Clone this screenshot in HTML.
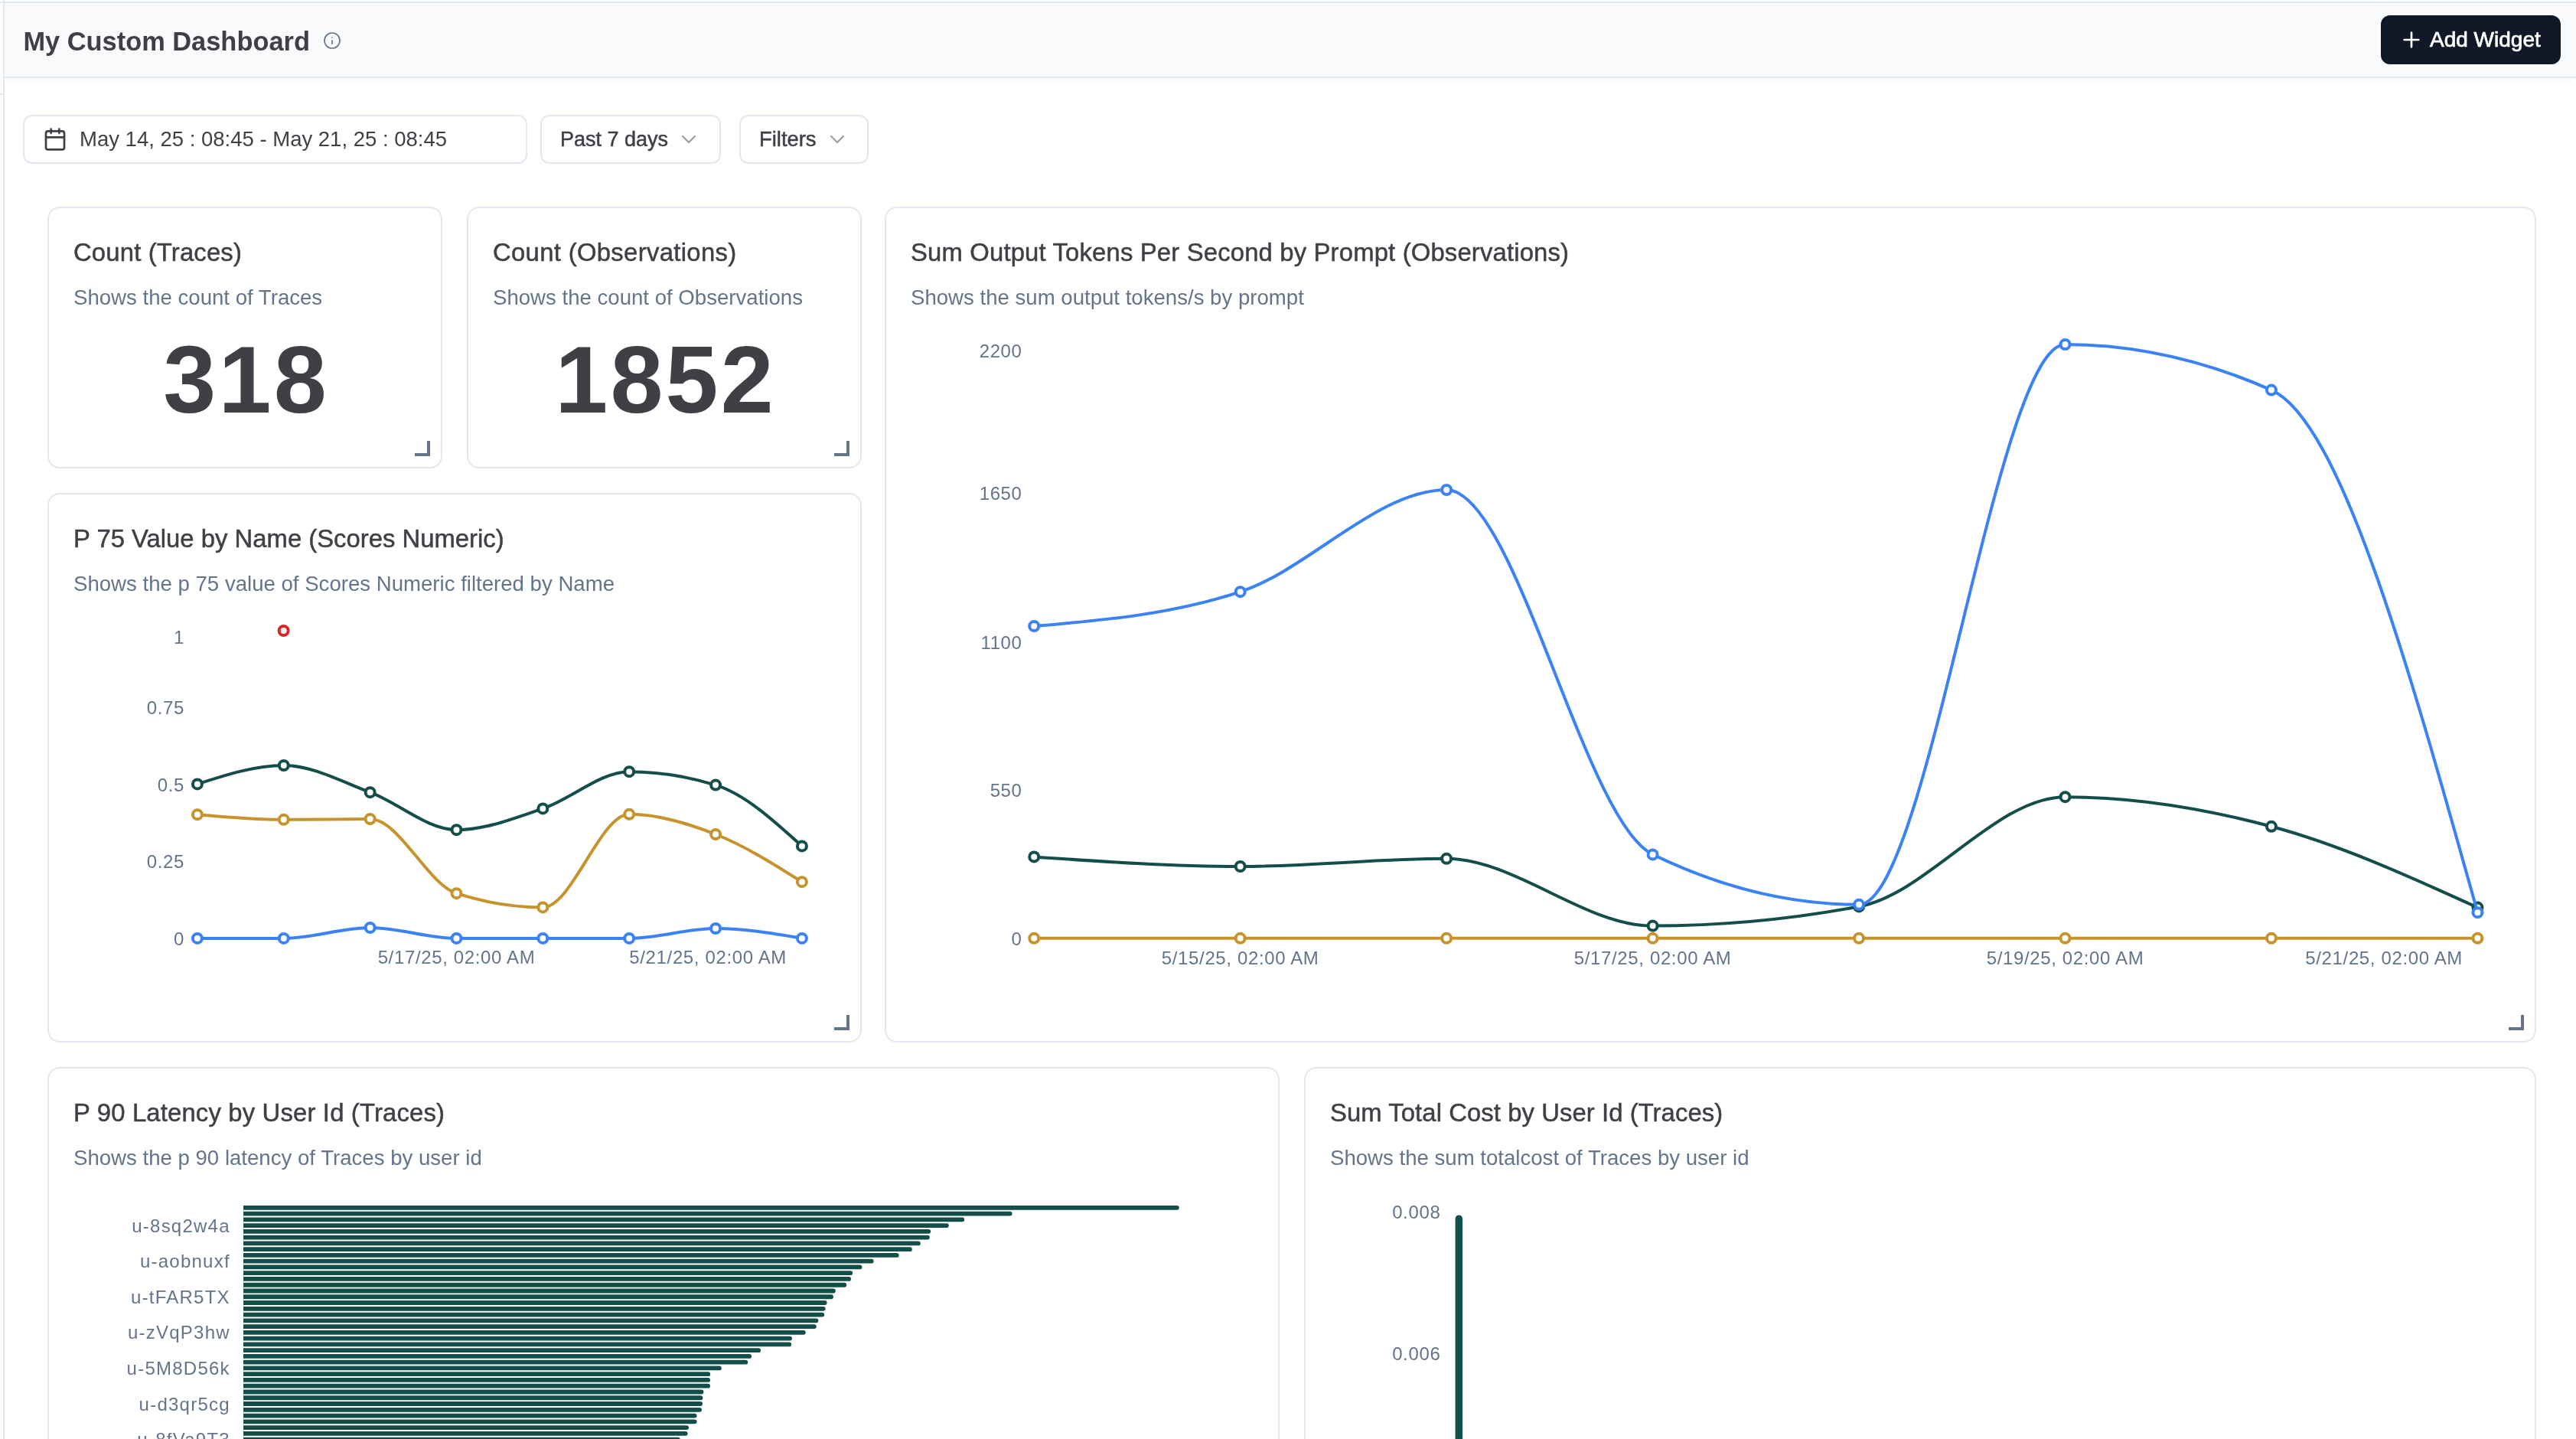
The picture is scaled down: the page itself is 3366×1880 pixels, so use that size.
<!DOCTYPE html>
<html><head><meta charset="utf-8"><title>My Custom Dashboard</title>
<style>
html,body{margin:0;padding:0;background:#fff;}
body{width:3366px;height:1880px;overflow:hidden;}
#root{zoom:2;position:relative;will-change:transform;width:1683px;height:940px;overflow:hidden;font-family:"Liberation Sans",sans-serif;color:#3f3f46;}
.abs{position:absolute;}
.card{position:absolute;box-sizing:border-box;border:1px solid #e2e8f0;border-radius:8px;background:#fff;}
.ct{position:absolute;left:16px;top:19px;-webkit-text-stroke:0.25px #3f3f46;font-size:16.4px;letter-spacing:0.09px;line-height:20px;white-space:nowrap;color:#3f3f46;}
.cs{position:absolute;left:16px;top:50.5px;font-size:13.8px;line-height:16px;white-space:nowrap;color:#64748b;}
.big{position:absolute;text-align:center;font-size:62px;letter-spacing:1.6px;text-indent:1.6px;font-weight:bold;line-height:62px;color:#3f3f46;}
.hd{position:absolute;background:#64748b;}
.ov{position:absolute;left:0;top:0;font-family:"Liberation Sans",sans-serif;}
.btnb{position:absolute;box-sizing:border-box;border:1px solid #e2e8f0;border-radius:6px;background:#fff;height:32px;top:75px;}
</style></head><body><div id="root">
<div class="abs" style="left:0;top:1px;width:1683px;height:1px;background:#e2e8f0"></div>
<div class="abs" style="left:3px;top:2px;width:1680px;height:48px;background:#f8fafc"></div>
<div class="abs" style="left:3px;top:50px;width:1680px;height:1px;background:#e2e8f0;box-shadow:0 1px 3px rgba(0,0,0,0.06)"></div>
<div class="abs" style="left:2px;top:0;width:1px;height:940px;background:#e2e8f0"></div>
<div class="abs" style="left:0;top:61px;width:2px;height:1px;background:#e2e8f0"></div>
<div class="abs" style="left:15.2px;top:16px;font-size:17.2px;font-weight:bold;line-height:22px;white-space:nowrap;color:#3f3f46">My Custom Dashboard</div>
<svg class="abs" style="left:211px;top:20.5px" width="12" height="12" viewBox="0 0 24 24" fill="none" stroke="#64748b" stroke-width="1.7" stroke-linecap="round"><circle cx="12" cy="12" r="10"/><path d="M12 16v-4M12 8h.01"/></svg>
<div class="abs" style="left:1555.5px;top:10px;width:117.5px;height:32px;border-radius:6px;background:#111827"></div>
<svg class="abs" style="left:1567.6px;top:18px" width="16" height="16" viewBox="0 0 24 24" fill="none" stroke="#fff" stroke-width="2" stroke-linecap="round"><path d="M5 12h14M12 5v14"/></svg>
<div class="abs" style="left:1587.5px;top:18px;font-size:14px;line-height:16px;white-space:nowrap;color:#fff;-webkit-text-stroke:0.35px #fff">Add Widget</div>
<div class="btnb" style="left:15px;width:329.5px"></div>
<svg class="abs" style="left:28px;top:82.8px" width="16" height="16" viewBox="0 0 24 24" fill="none" stroke="#3f3f46" stroke-width="2" stroke-linecap="round" stroke-linejoin="round"><rect x="3" y="4" width="18" height="18" rx="2"/><path d="M16 2v4M8 2v4M3 10h18"/></svg>
<div class="abs" style="left:52px;top:83px;font-size:13.75px;line-height:16px;white-space:nowrap;color:#3f3f46">May 14, 25 : 08:45 - May 21, 25 : 08:45</div>
<div class="btnb" style="left:353px;width:118px"></div>
<div class="abs" style="left:366px;top:83px;font-size:13.5px;line-height:16px;white-space:nowrap;color:#3f3f46;-webkit-text-stroke:0.25px #3f3f46">Past 7 days</div>
<svg class="abs" style="left:442px;top:83px" width="16" height="16" viewBox="0 0 24 24" fill="none" stroke="#3f3f46" stroke-opacity="0.5" stroke-width="1.75" stroke-linecap="round" stroke-linejoin="round"><path d="m6 9 6 6 6-6"/></svg>
<div class="btnb" style="left:483px;width:84.5px"></div>
<div class="abs" style="left:496px;top:83px;font-size:13.7px;line-height:16px;white-space:nowrap;color:#3f3f46;-webkit-text-stroke:0.25px #3f3f46">Filters</div>
<svg class="abs" style="left:539px;top:83px" width="16" height="16" viewBox="0 0 24 24" fill="none" stroke="#3f3f46" stroke-opacity="0.5" stroke-width="1.75" stroke-linecap="round" stroke-linejoin="round"><path d="m6 9 6 6 6-6"/></svg>
<div class="card" style="left:31px;top:135px;width:258px;height:171px"><div class="ct" style="letter-spacing:0.09px">Count (Traces)</div><div class="cs">Shows the count of Traces</div></div><div class="big" style="left:31px;width:258px;top:217px">318</div><div class="hd" style="left:271px;top:296px;width:10px;height:2px"></div><div class="hd" style="left:279px;top:288px;width:2px;height:10px"></div><div class="card" style="left:305px;top:135px;width:258px;height:171px"><div class="ct" style="letter-spacing:0.17px">Count (Observations)</div><div class="cs">Shows the count of Observations</div></div><div class="big" style="left:305px;width:258px;top:217px">1852</div><div class="hd" style="left:545px;top:296px;width:10px;height:2px"></div><div class="hd" style="left:553px;top:288px;width:2px;height:10px"></div><div class="card" style="left:578px;top:135px;width:1079px;height:546px"><div class="ct" style="letter-spacing:0.09px">Sum Output Tokens Per Second by Prompt (Observations)</div><div class="cs">Shows the sum output tokens/s by prompt</div></div><div class="hd" style="left:1639px;top:671px;width:10px;height:2px"></div><div class="hd" style="left:1647px;top:663px;width:2px;height:10px"></div><div class="card" style="left:31px;top:322px;width:532px;height:359px"><div class="ct" style="letter-spacing:0.01px">P 75 Value by Name (Scores Numeric)</div><div class="cs">Shows the p 75 value of Scores Numeric filtered by Name</div></div><div class="hd" style="left:545px;top:671px;width:10px;height:2px"></div><div class="hd" style="left:553px;top:663px;width:2px;height:10px"></div><div class="card" style="left:31px;top:697px;width:805px;height:400px"><div class="ct" style="letter-spacing:0.09px">P 90 Latency by User Id (Traces)</div><div class="cs">Shows the p 90 latency of Traces by user id</div></div><div class="card" style="left:852px;top:697px;width:805px;height:400px"><div class="ct" style="letter-spacing:0.043px">Sum Total Cost by User Id (Traces)</div><div class="cs">Shows the sum totalcost of Traces by user id</div></div>
<svg class="ov" width="1683" height="940" viewBox="0 0 1683 940"><text x="667.80" y="229.40" text-anchor="end" dominant-baseline="central" font-size="12" letter-spacing="0.32" fill="#64748b">2200</text><text x="667.80" y="322.40" text-anchor="end" dominant-baseline="central" font-size="12" letter-spacing="0.32" fill="#64748b">1650</text><text x="667.80" y="419.50" text-anchor="end" dominant-baseline="central" font-size="12" letter-spacing="0.32" fill="#64748b">1100</text><text x="667.80" y="516.30" text-anchor="end" dominant-baseline="central" font-size="12" letter-spacing="0.32" fill="#64748b">550</text><text x="667.80" y="613.30" text-anchor="end" dominant-baseline="central" font-size="12" letter-spacing="0.32" fill="#64748b">0</text><text x="810.33" y="625.50" text-anchor="middle" dominant-baseline="central" font-size="12" letter-spacing="0.32" fill="#64748b">5/15/25, 02:00 AM</text><text x="1079.79" y="625.50" text-anchor="middle" dominant-baseline="central" font-size="12" letter-spacing="0.32" fill="#64748b">5/17/25, 02:00 AM</text><text x="1349.25" y="625.50" text-anchor="middle" dominant-baseline="central" font-size="12" letter-spacing="0.32" fill="#64748b">5/19/25, 02:00 AM</text><text x="1609.00" y="625.50" text-anchor="end" dominant-baseline="central" font-size="12" letter-spacing="0.32" fill="#64748b">5/21/25, 02:00 AM</text><path d="M675.60,559.70C720.51,562.85,765.42,566.00,810.33,566.00C855.24,566.00,900.15,560.90,945.06,560.90C989.97,560.90,1034.88,604.80,1079.79,604.80C1124.70,604.80,1169.61,600.60,1214.52,592.20C1259.43,583.80,1304.34,520.60,1349.25,520.60C1394.16,520.60,1439.07,527.87,1483.98,539.90C1528.89,551.93,1573.80,572.37,1618.71,592.80" fill="none" stroke="#134e4a" stroke-width="2" stroke-linejoin="round" stroke-linecap="round"/><circle cx="675.60" cy="559.70" r="3" fill="#fff" stroke="#134e4a" stroke-width="2"/><circle cx="810.33" cy="566.00" r="3" fill="#fff" stroke="#134e4a" stroke-width="2"/><circle cx="945.06" cy="560.90" r="3" fill="#fff" stroke="#134e4a" stroke-width="2"/><circle cx="1079.79" cy="604.80" r="3" fill="#fff" stroke="#134e4a" stroke-width="2"/><circle cx="1214.52" cy="592.20" r="3" fill="#fff" stroke="#134e4a" stroke-width="2"/><circle cx="1349.25" cy="520.60" r="3" fill="#fff" stroke="#134e4a" stroke-width="2"/><circle cx="1483.98" cy="539.90" r="3" fill="#fff" stroke="#134e4a" stroke-width="2"/><circle cx="1618.71" cy="592.80" r="3" fill="#fff" stroke="#134e4a" stroke-width="2"/><path d="M675.60,612.90C720.51,612.90,765.42,612.90,810.33,612.90C855.24,612.90,900.15,612.90,945.06,612.90C989.97,612.90,1034.88,612.90,1079.79,612.90C1124.70,612.90,1169.61,612.90,1214.52,612.90C1259.43,612.90,1304.34,612.90,1349.25,612.90C1394.16,612.90,1439.07,612.90,1483.98,612.90C1528.89,612.90,1573.80,612.90,1618.71,612.90" fill="none" stroke="#c7932c" stroke-width="2" stroke-linejoin="round" stroke-linecap="round"/><circle cx="675.60" cy="612.90" r="3" fill="#fff" stroke="#c7932c" stroke-width="2"/><circle cx="810.33" cy="612.90" r="3" fill="#fff" stroke="#c7932c" stroke-width="2"/><circle cx="945.06" cy="612.90" r="3" fill="#fff" stroke="#c7932c" stroke-width="2"/><circle cx="1079.79" cy="612.90" r="3" fill="#fff" stroke="#c7932c" stroke-width="2"/><circle cx="1214.52" cy="612.90" r="3" fill="#fff" stroke="#c7932c" stroke-width="2"/><circle cx="1349.25" cy="612.90" r="3" fill="#fff" stroke="#c7932c" stroke-width="2"/><circle cx="1483.98" cy="612.90" r="3" fill="#fff" stroke="#c7932c" stroke-width="2"/><circle cx="1618.71" cy="612.90" r="3" fill="#fff" stroke="#c7932c" stroke-width="2"/><path d="M675.60,409.00C720.51,405.22,765.42,401.43,810.33,386.60C855.24,371.77,900.15,320.00,945.06,320.00C989.97,320.00,1034.88,536.40,1079.79,558.20C1124.70,580.00,1169.61,590.90,1214.52,590.90C1259.43,590.90,1304.34,225.00,1349.25,225.00C1394.16,225.00,1439.07,234.93,1483.98,254.80C1528.89,274.67,1573.80,435.38,1618.71,596.10" fill="none" stroke="#3b82f6" stroke-width="2" stroke-linejoin="round" stroke-linecap="round"/><circle cx="675.60" cy="409.00" r="3" fill="#fff" stroke="#3b82f6" stroke-width="2"/><circle cx="810.33" cy="386.60" r="3" fill="#fff" stroke="#3b82f6" stroke-width="2"/><circle cx="945.06" cy="320.00" r="3" fill="#fff" stroke="#3b82f6" stroke-width="2"/><circle cx="1079.79" cy="558.20" r="3" fill="#fff" stroke="#3b82f6" stroke-width="2"/><circle cx="1214.52" cy="590.90" r="3" fill="#fff" stroke="#3b82f6" stroke-width="2"/><circle cx="1349.25" cy="225.00" r="3" fill="#fff" stroke="#3b82f6" stroke-width="2"/><circle cx="1483.98" cy="254.80" r="3" fill="#fff" stroke="#3b82f6" stroke-width="2"/><circle cx="1618.71" cy="596.10" r="3" fill="#fff" stroke="#3b82f6" stroke-width="2"/><text x="120.50" y="416.40" text-anchor="end" dominant-baseline="central" font-size="12" letter-spacing="0.32" fill="#64748b">1</text><text x="120.50" y="462.30" text-anchor="end" dominant-baseline="central" font-size="12" letter-spacing="0.32" fill="#64748b">0.75</text><text x="120.50" y="512.80" text-anchor="end" dominant-baseline="central" font-size="12" letter-spacing="0.32" fill="#64748b">0.5</text><text x="120.50" y="562.70" text-anchor="end" dominant-baseline="central" font-size="12" letter-spacing="0.32" fill="#64748b">0.25</text><text x="120.50" y="613.10" text-anchor="end" dominant-baseline="central" font-size="12" letter-spacing="0.32" fill="#64748b">0</text><text x="298.24" y="625.30" text-anchor="middle" dominant-baseline="central" font-size="12" letter-spacing="0.32" fill="#64748b">5/17/25, 02:00 AM</text><text x="514.00" y="625.30" text-anchor="end" dominant-baseline="central" font-size="12" letter-spacing="0.32" fill="#64748b">5/21/25, 02:00 AM</text><path d="M128.95,512.20C147.76,506.10,166.57,500.00,185.38,500.00C204.19,500.00,223.00,510.58,241.81,517.60C260.62,524.62,279.43,542.10,298.24,542.10C317.05,542.10,335.86,534.53,354.67,528.20C373.48,521.87,392.29,504.10,411.10,504.10C429.91,504.10,448.72,507.00,467.53,512.80C486.34,518.60,505.15,535.65,523.96,552.70" fill="none" stroke="#134e4a" stroke-width="2" stroke-linejoin="round" stroke-linecap="round"/><circle cx="128.95" cy="512.20" r="3" fill="#fff" stroke="#134e4a" stroke-width="2"/><circle cx="185.38" cy="500.00" r="3" fill="#fff" stroke="#134e4a" stroke-width="2"/><circle cx="241.81" cy="517.60" r="3" fill="#fff" stroke="#134e4a" stroke-width="2"/><circle cx="298.24" cy="542.10" r="3" fill="#fff" stroke="#134e4a" stroke-width="2"/><circle cx="354.67" cy="528.20" r="3" fill="#fff" stroke="#134e4a" stroke-width="2"/><circle cx="411.10" cy="504.10" r="3" fill="#fff" stroke="#134e4a" stroke-width="2"/><circle cx="467.53" cy="512.80" r="3" fill="#fff" stroke="#134e4a" stroke-width="2"/><circle cx="523.96" cy="552.70" r="3" fill="#fff" stroke="#134e4a" stroke-width="2"/><path d="M128.95,532.10C147.76,533.75,166.57,535.40,185.38,535.40C204.19,535.40,223.00,535.00,241.81,535.00C260.62,535.00,279.43,577.53,298.24,583.60C317.05,589.67,335.86,592.70,354.67,592.70C373.48,592.70,392.29,531.90,411.10,531.90C429.91,531.90,448.72,537.63,467.53,545.00C486.34,552.37,505.15,564.23,523.96,576.10" fill="none" stroke="#c7932c" stroke-width="2" stroke-linejoin="round" stroke-linecap="round"/><circle cx="128.95" cy="532.10" r="3" fill="#fff" stroke="#c7932c" stroke-width="2"/><circle cx="185.38" cy="535.40" r="3" fill="#fff" stroke="#c7932c" stroke-width="2"/><circle cx="241.81" cy="535.00" r="3" fill="#fff" stroke="#c7932c" stroke-width="2"/><circle cx="298.24" cy="583.60" r="3" fill="#fff" stroke="#c7932c" stroke-width="2"/><circle cx="354.67" cy="592.70" r="3" fill="#fff" stroke="#c7932c" stroke-width="2"/><circle cx="411.10" cy="531.90" r="3" fill="#fff" stroke="#c7932c" stroke-width="2"/><circle cx="467.53" cy="545.00" r="3" fill="#fff" stroke="#c7932c" stroke-width="2"/><circle cx="523.96" cy="576.10" r="3" fill="#fff" stroke="#c7932c" stroke-width="2"/><path d="M128.95,612.95C147.76,612.95,166.57,612.95,185.38,612.95C204.19,612.95,223.00,606.00,241.81,606.00C260.62,606.00,279.43,612.95,298.24,612.95C317.05,612.95,335.86,612.95,354.67,612.95C373.48,612.95,392.29,612.95,411.10,612.95C429.91,612.95,448.72,606.50,467.53,606.50C486.34,606.50,505.15,609.73,523.96,612.95" fill="none" stroke="#3b82f6" stroke-width="2" stroke-linejoin="round" stroke-linecap="round"/><circle cx="128.95" cy="612.95" r="3" fill="#fff" stroke="#3b82f6" stroke-width="2"/><circle cx="185.38" cy="612.95" r="3" fill="#fff" stroke="#3b82f6" stroke-width="2"/><circle cx="241.81" cy="606.00" r="3" fill="#fff" stroke="#3b82f6" stroke-width="2"/><circle cx="298.24" cy="612.95" r="3" fill="#fff" stroke="#3b82f6" stroke-width="2"/><circle cx="354.67" cy="612.95" r="3" fill="#fff" stroke="#3b82f6" stroke-width="2"/><circle cx="411.10" cy="612.95" r="3" fill="#fff" stroke="#3b82f6" stroke-width="2"/><circle cx="467.53" cy="606.50" r="3" fill="#fff" stroke="#3b82f6" stroke-width="2"/><circle cx="523.96" cy="612.95" r="3" fill="#fff" stroke="#3b82f6" stroke-width="2"/><circle cx="185.3" cy="412" r="3" fill="#fff" stroke="#dc2626" stroke-width="2"/><path d="M159,787.45H768.95A1.45,1.45 0 0 1 768.95,790.35H159Z" fill="#134e4a"/><path d="M159,791.33H659.85A1.45,1.45 0 0 1 659.85,794.23H159Z" fill="#134e4a"/><path d="M159,795.21H628.65A1.45,1.45 0 0 1 628.65,798.11H159Z" fill="#134e4a"/><path d="M159,799.10H618.45A1.45,1.45 0 0 1 618.45,802.00H159Z" fill="#134e4a"/><path d="M159,802.98H606.65A1.45,1.45 0 0 1 606.65,805.88H159Z" fill="#134e4a"/><path d="M159,806.86H605.95A1.45,1.45 0 0 1 605.95,809.76H159Z" fill="#134e4a"/><path d="M159,810.74H599.95A1.45,1.45 0 0 1 599.95,813.64H159Z" fill="#134e4a"/><path d="M159,814.62H594.45A1.45,1.45 0 0 1 594.45,817.52H159Z" fill="#134e4a"/><path d="M159,818.51H585.85A1.45,1.45 0 0 1 585.85,821.41H159Z" fill="#134e4a"/><path d="M159,822.39H569.35A1.45,1.45 0 0 1 569.35,825.29H159Z" fill="#134e4a"/><path d="M159,826.27H561.75A1.45,1.45 0 0 1 561.75,829.17H159Z" fill="#134e4a"/><path d="M159,830.15H555.65A1.45,1.45 0 0 1 555.65,833.05H159Z" fill="#134e4a"/><path d="M159,834.03H554.55A1.45,1.45 0 0 1 554.55,836.93H159Z" fill="#134e4a"/><path d="M159,837.92H551.65A1.45,1.45 0 0 1 551.65,840.82H159Z" fill="#134e4a"/><path d="M159,841.80H544.45A1.45,1.45 0 0 1 544.45,844.70H159Z" fill="#134e4a"/><path d="M159,845.68H543.05A1.45,1.45 0 0 1 543.05,848.58H159Z" fill="#134e4a"/><path d="M159,849.56H538.85A1.45,1.45 0 0 1 538.85,852.46H159Z" fill="#134e4a"/><path d="M159,853.44H537.85A1.45,1.45 0 0 1 537.85,856.34H159Z" fill="#134e4a"/><path d="M159,857.33H537.15A1.45,1.45 0 0 1 537.15,860.23H159Z" fill="#134e4a"/><path d="M159,861.21H533.25A1.45,1.45 0 0 1 533.25,864.11H159Z" fill="#134e4a"/><path d="M159,865.09H531.95A1.45,1.45 0 0 1 531.95,867.99H159Z" fill="#134e4a"/><path d="M159,868.97H524.95A1.45,1.45 0 0 1 524.95,871.87H159Z" fill="#134e4a"/><path d="M159,872.85H516.05A1.45,1.45 0 0 1 516.05,875.75H159Z" fill="#134e4a"/><path d="M159,876.74H515.55A1.45,1.45 0 0 1 515.55,879.64H159Z" fill="#134e4a"/><path d="M159,880.62H495.55A1.45,1.45 0 0 1 495.55,883.52H159Z" fill="#134e4a"/><path d="M159,884.50H489.55A1.45,1.45 0 0 1 489.55,887.40H159Z" fill="#134e4a"/><path d="M159,888.38H487.15A1.45,1.45 0 0 1 487.15,891.28H159Z" fill="#134e4a"/><path d="M159,892.26H469.95A1.45,1.45 0 0 1 469.95,895.16H159Z" fill="#134e4a"/><path d="M159,896.15H462.65A1.45,1.45 0 0 1 462.65,899.05H159Z" fill="#134e4a"/><path d="M159,900.03H462.55A1.45,1.45 0 0 1 462.55,902.93H159Z" fill="#134e4a"/><path d="M159,903.91H462.55A1.45,1.45 0 0 1 462.55,906.81H159Z" fill="#134e4a"/><path d="M159,907.79H458.25A1.45,1.45 0 0 1 458.25,910.69H159Z" fill="#134e4a"/><path d="M159,911.67H457.75A1.45,1.45 0 0 1 457.75,914.57H159Z" fill="#134e4a"/><path d="M159,915.56H457.55A1.45,1.45 0 0 1 457.55,918.46H159Z" fill="#134e4a"/><path d="M159,919.44H457.05A1.45,1.45 0 0 1 457.05,922.34H159Z" fill="#134e4a"/><path d="M159,923.32H453.85A1.45,1.45 0 0 1 453.85,926.22H159Z" fill="#134e4a"/><path d="M159,927.20H453.85A1.45,1.45 0 0 1 453.85,930.10H159Z" fill="#134e4a"/><path d="M159,931.08H448.55A1.45,1.45 0 0 1 448.55,933.98H159Z" fill="#134e4a"/><path d="M159,934.97H447.85A1.45,1.45 0 0 1 447.85,937.87H159Z" fill="#134e4a"/><path d="M159,938.85H442.95A1.45,1.45 0 0 1 442.95,941.75H159Z" fill="#134e4a"/><text x="150.40" y="800.55" text-anchor="end" dominant-baseline="central" font-size="12" letter-spacing="0.62" fill="#64748b">u-8sq2w4a</text><text x="150.40" y="823.84" text-anchor="end" dominant-baseline="central" font-size="12" letter-spacing="0.62" fill="#64748b">u-aobnuxf</text><text x="150.40" y="847.13" text-anchor="end" dominant-baseline="central" font-size="12" letter-spacing="0.62" fill="#64748b">u-tFAR5TX</text><text x="150.40" y="870.42" text-anchor="end" dominant-baseline="central" font-size="12" letter-spacing="0.62" fill="#64748b">u-zVqP3hw</text><text x="150.40" y="893.71" text-anchor="end" dominant-baseline="central" font-size="12" letter-spacing="0.62" fill="#64748b">u-5M8D56k</text><text x="150.40" y="917.01" text-anchor="end" dominant-baseline="central" font-size="12" letter-spacing="0.62" fill="#64748b">u-d3qr5cg</text><text x="150.40" y="940.30" text-anchor="end" dominant-baseline="central" font-size="12" letter-spacing="0.62" fill="#64748b">u-8fVa9T3</text><text x="941.20" y="791.60" text-anchor="end" dominant-baseline="central" font-size="12" letter-spacing="0.32" fill="#64748b">0.008</text><text x="941.20" y="884.30" text-anchor="end" dominant-baseline="central" font-size="12" letter-spacing="0.32" fill="#64748b">0.006</text><path d="M950.8,950V796.05A2.35,2.35 0 0 1 955.5,796.05V950Z" fill="#134e4a"/></svg>
</div></body></html>
